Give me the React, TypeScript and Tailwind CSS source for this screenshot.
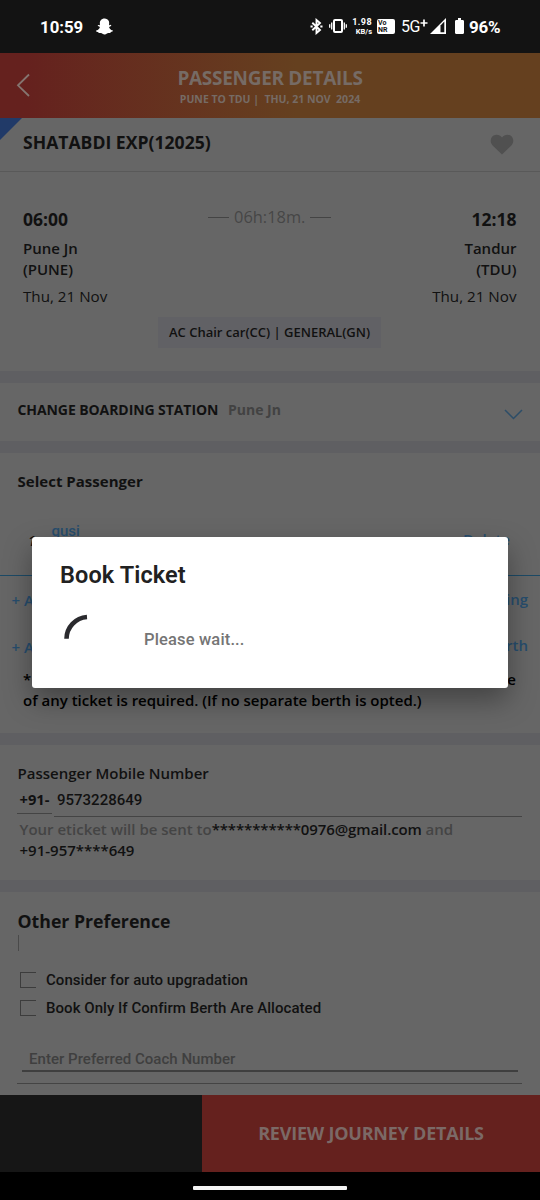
import React from "react";
import { FaSnapchatGhost } from "react-icons/fa";

function StatusBar() {
  return (
    <div className="flex h-[53px] items-start bg-[#131313] pt-[17px] font-['Roboto'] text-white">
      <span className="ml-[40px] w-[56px] text-[16.800px] leading-[20px] font-bold">10:59</span>
      <FaSnapchatGhost className="mt-[1px] h-[17px] w-[17px]" />
      <svg className="mt-[1px] ml-[196px] h-[17px] w-[15px]" viewBox="0 0 15 17" fill="none" stroke="white" strokeWidth="1.9">
        <path d="M3.300 4.700 11 12 7.500 15V2L11 5 3.300 12.300" />
        <path d="M1.500 8.500h2.200M11.300 8.500h2.200" />
      </svg>
      <svg className="mt-[1px] ml-[5px] h-[16px] w-[18px]" viewBox="0 0 18 16" fill="none" stroke="white">
        <rect x="5" y="2" width="8" height="12" rx="1" strokeWidth="2" />
        <path d="M2.700 4.500v7M15.300 4.500v7M.7 6.200v3.600M17.300 6.200v3.600" strokeWidth="1.300" />
      </svg>
      <div className="ml-[5px] flex w-[20px] flex-col items-end text-[9px] leading-[10px] font-bold">
        <span className="tracking-[0.4px]">1.98</span>
        <span className="text-[7.500px] leading-[9px]">KB/s</span>
      </div>
      <div className="mt-[2px] ml-[5px] h-[15px] w-[18px] rounded-[2px] bg-white pt-[0.500px] pl-[1px] text-[7px] leading-[7px] font-bold text-[#131313]">
        <div>Vo</div>
        <div>NR</div>
      </div>
      <div className="ml-[6px] flex w-[29px] items-start text-[16px] leading-[20px] whitespace-nowrap">
        <span className="tracking-[-0.5px]">5G</span>
        <svg className="mt-[2px] h-[8px] w-[8px]" viewBox="0 0 8 8" stroke="white" strokeWidth="1.700">
          <path d="M4 .5v7M.5 4h7" />
        </svg>
      </div>
      <svg className="mt-[1px] h-[16px] w-[16px]" viewBox="0 0 16 16">
        <path d="M0 16 16 0v16z" fill="white" />
        <path d="M10.500 7.500 14.300 3.500v10.800h-3.800z" fill="#131313" />
      </svg>
      <svg className="mt-[1px] ml-[9px] h-[16px] w-[9px]" viewBox="0 0 9 16">
        <path d="M3 0h3v2h2.200L9 3v12l-.8 1H.8L0 15V3l.8-1H3z" fill="white" />
      </svg>
      <span className="ml-[5px] text-[17px] leading-[20px] font-bold tracking-[-0.2px]">96%</span>
    </div>
  );
}

function Header() {
  return (
    <div className="relative flex h-[65px] flex-col items-center bg-linear-to-r from-[#65211e] from-5% to-[#65401f] to-55% pt-[15px] text-[#766b65]">
      <svg className="absolute top-[20px] left-[16px] h-[24px] w-[14px]" viewBox="0 0 14 24" fill="none" stroke="#857570" strokeWidth="1.8">
        <path d="M13 1.500 2 12.300 13 23" />
      </svg>
      <span className="text-[19px] leading-[20px] font-bold tracking-[-0.300px]">PASSENGER DETAILS</span>
      <span className="mt-[3px] text-[10.500px] leading-[16px] font-bold whitespace-pre">PUNE TO TDU |  THU, 21 NOV  2024</span>
    </div>
  );
}

function Journey() {
  return (
    <>
      <div className="relative flex h-[54px] justify-between border-b border-[#595959] pt-[14px] pr-[26px] pl-[23px]">
        <svg className="absolute top-0 left-0 h-[22px] w-[22px]" viewBox="0 0 22 22">
          <path d="M0 0h22L0 22z" fill="#213a68" />
        </svg>
        <span className="text-[17.600px] leading-[20px] font-bold">SHATABDI EXP(12025)</span>
        <svg className="mt-[2px] h-[21px] w-[24px]" viewBox="0 0 24 21">
          <path d="M12 20.500 2.600 11.500C-.3 8.500.3 3.500 3.500 1.600 6.500 0 10 .8 12 3.500 14 .8 17.500 0 20.500 1.600c3.200 1.900 3.800 6.900.9 9.900z" fill="#505050" />
        </svg>
      </div>
      <div className="flex h-[199px] flex-col pt-[37px] pr-[23.500px] pl-[23px]">
        <div className="flex justify-between">
          <div className="flex w-[120px] flex-col">
            <span className="text-[17.500px] leading-[20px] font-bold">06:00</span>
            <span className="mt-[9px] text-[15px] leading-[21px] font-semibold">Pune Jn<br />(PUNE)</span>
            <span className="mt-[6px] text-[15.200px] leading-[20px]">Thu, 21 Nov</span>
          </div>
          <div className="mt-[-2px] flex h-[20px] items-center gap-[5px] text-[16.400px] text-[#464646]">
            <span className="h-px w-[21px] bg-[#444]" />
            <span className="leading-[20px]">06h:18m.</span>
            <span className="h-px w-[21px] bg-[#444]" />
          </div>
          <div className="flex w-[120px] flex-col text-right">
            <span className="text-[17.500px] leading-[20px] font-bold">12:18</span>
            <span className="mt-[9px] text-[15px] leading-[21px] font-semibold">Tandur<br />(TDU)</span>
            <span className="mt-[6px] text-[15.200px] leading-[20px]">Thu, 21 Nov</span>
          </div>
        </div>
        <div className="mt-[11px] ml-[135px] flex h-[31px] w-[223px] items-center justify-center bg-[#616165] text-[13px] font-semibold whitespace-nowrap">
          AC Chair car(CC) | GENERAL(GN)
        </div>
      </div>
    </>
  );
}

function Gap() {
  return <div className="h-[12px] bg-[#5f5f62]" />;
}

function Boarding() {
  return (
    <div className="flex h-[58px] items-start pt-[17px] pl-[17.500px] font-bold">
      <span className="w-[210.500px] text-[14px] leading-[20px] tracking-[-0.080px] whitespace-nowrap">CHANGE BOARDING STATION</span>
      <span className="w-[276px] text-[14px] leading-[20px] text-[#424242]">Pune Jn</span>
      <svg className="mt-[9px] h-[11px] w-[19px]" viewBox="0 0 19 11" fill="none" stroke="#2c4d68" strokeWidth="1.500">
        <path d="M1 1 9.500 9.500 18 1" />
      </svg>
    </div>
  );
}

function Passengers() {
  return (
    <div className="flex h-[280px] flex-col pt-[18px] font-semibold">
      <span className="pl-[17.500px] text-[15px] leading-[20px] font-bold tracking-[0.020px]">Select Passenger</span>
      <div className="flex h-[85px] items-start border-b border-[#1c4a66] pt-[30px] pl-[28px] text-[#274d6d]">
        <span className="mt-[10px] w-[23.500px] text-[14px] leading-[20px] text-[#111] italic">1</span>
        <span className="grow font-['Roboto'] text-[15px] leading-[20px] font-medium">gusi</span>
        <span className="mt-[8px] mr-[30px] text-[15px] leading-[20px]">Delete</span>
      </div>
      <div className="flex h-[47px] justify-between pt-[13px] pr-[12px] pl-[11.500px] text-[15px] leading-[20px] text-[#274d6d]">
        <span className="mt-[1px]">+ Add Passenger</span>
        <span>+ Add Existing</span>
      </div>
      <div className="flex h-[46px] justify-between pt-[12px] pr-[12px] pl-[11.500px] text-[15px] leading-[20px] text-[#274d6d]">
        <span className="mt-[2px]">+ Add Infant</span>
        <span>Without Berth</span>
      </div>
      <div className="flex justify-between pr-[24px] pl-[23px] text-[15px] leading-[21px] text-black">
        <span>* For children (upto 4 years) travelling in train</span>
        <span>no purchase</span>
      </div>
      <span className="pl-[23px] text-[15px] leading-[21px] text-black">of any ticket is required. (If no separate berth is opted.)</span>
    </div>
  );
}

function Mobile() {
  return (
    <div className="flex h-[135px] flex-col pt-[18px] pl-[17px] text-[15px] leading-[20px] font-semibold">
      <span className="pl-[0.500px]">Passenger Mobile Number</span>
      <div className="flex items-start gap-[2px]">
        <div className="h-[31px] w-[35px] border-b border-[#444] pt-[6px] pl-[2.500px] text-[14.700px] font-bold">+91-</div>
        <div className="h-[34px] w-[468px] border-b border-[#444] pt-[7px] pl-[3px] font-['Roboto'] font-medium">9573228649</div>
      </div>
      <div className="mt-[2px] pl-[2.500px] text-[15px] leading-[20.500px]">
        <span className="text-[#444]">Your eticket will be sent to</span>
        <span className="tracking-[-0.110px]">***********0976@gmail.com </span>
        <span className="text-[#444]">and</span>
        <br />
        +91-957****649
      </div>
    </div>
  );
}

function CheckRow({ label }: { label: string }) {
  return (
    <div className="flex h-[28px] items-start gap-[10px]">
      <span className="h-[16px] w-[16px] border-y border-l border-[#3c3c3c]" />
      <span className="text-[15px] leading-[16px] tracking-[0.045px]">{label}</span>
    </div>
  );
}

function Preferences() {
  return (
    <div className="flex h-[203px] flex-col pt-[19px] pl-[17px]">
      <span className="pl-[0.500px] text-[17.700px] leading-[20px] font-bold">Other Preference</span>
      <span className="mt-[4px] ml-[1px] h-[16px] w-px bg-[#4a4a4a]" />
      <div className="mt-[21px] pl-[3px] font-['Roboto'] font-medium">
        <CheckRow label="Consider for auto upgradation" />
        <CheckRow label="Book Only If Confirm Berth Are Allocated" />
      </div>
      <div className="mt-[21px] ml-[5px] h-[23px] w-[496px] border-b-2 border-[#3f3f3f] pl-[7px] font-['Roboto'] text-[15px] leading-[20px] font-medium tracking-[0.030px] text-[#3f3f3f]">
        Enter Preferred Coach Number
      </div>
      <div className="mt-[11px] h-px w-[505px] bg-[#444]" />
    </div>
  );
}

function Footer() {
  return (
    <>
      <div className="flex h-[77px]">
        <div className="w-[202px] bg-[#161616]" />
        <div className="flex grow items-center justify-center bg-[#65211e] text-[18px] font-bold tracking-[-0.220px] text-[#7b6966]">
          <span>REVIEW JOURNEY DETAILS</span>
        </div>
      </div>
      <div className="flex h-[28px] justify-center bg-black pt-[14px]">
        <div className="h-[4px] w-[154px] rounded-[1px] bg-[#f4f4f4]" />
      </div>
    </>
  );
}

function Dialog() {
  return (
    <div className="absolute top-[537px] left-[32px] h-[151px] w-[476px] rounded-[3px] bg-white pt-[26px] pl-[28px] font-['Roboto'] shadow-[0_12px_28px_rgba(0,0,0,0.35)]">
      <div className="text-[23.500px] leading-[24px] font-semibold tracking-[0.100px] text-[#212121]">Book Ticket</div>
      <div className="mt-[26px] flex items-start">
        <svg className="ml-[3px] h-[50px] w-[50px]" viewBox="0 0 50 50" fill="none" stroke="#2a2a2e" strokeWidth="4.600">
          <path d="M3.500 25.700A22 22 0 0 1 24 4" />
        </svg>
        <span className="mt-[17px] ml-[31px] text-[16.500px] leading-[20px] font-medium tracking-[0.150px] text-[#757575]">Please wait...</span>
      </div>
    </div>
  );
}

export default function App() {
  return (
    <div className="relative h-[1200px] w-[540px] overflow-hidden bg-[#666] font-['Open_Sans',sans-serif] text-[#111]">
      <StatusBar />
      <Header />
      <Journey />
      <Gap />
      <Boarding />
      <Gap />
      <Passengers />
      <Gap />
      <Mobile />
      <Gap />
      <Preferences />
      <Footer />
      <Dialog />
    </div>
  );
}
